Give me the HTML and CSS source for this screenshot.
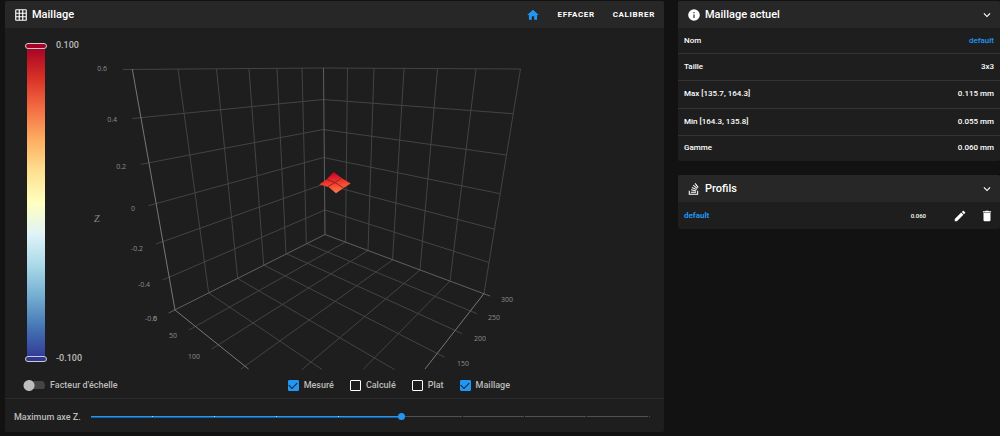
FILE: index.html
```html
<!DOCTYPE html>
<html lang="fr">
<head>
<meta charset="utf-8">
<title>Maillage</title>
<link rel="stylesheet" href="styles.css">
</head>
<body>
<main class="layout">
  <section class="card">
    <header class="card-head">
      <svg class="icon" viewBox="0 0 24 24" aria-hidden="true"><path d="M10,4V8H14V4H10M16,4V8H20V4H16M16,10V14H20V10H16M16,16V20H20V16H16M14,20V16H10V20H14M8,20V16H4V20H8M8,14V10H4V14H8M8,8V4H4V8H8M10,14H14V10H10V14M4,2H20A2,2 0 0,1 22,4V20A2,2 0 0,1 20,22H4C2.92,22 2,21.1 2,20V4A2,2 0 0,1 4,2Z"/></svg>
      <h1 class="title">Maillage</h1>
      <div class="toolbar">
        <button class="btn btn-home" aria-label="Origine"><svg class="icon" viewBox="0 0 24 24" aria-hidden="true"><path d="M10,20V14H14V20H19V12H22L12,3L2,12H5V20H10Z"/></svg></button>
        <button class="btn">EFFACER</button>
        <button class="btn">CALIBRER</button>
      </div>
    </header>

    <svg class="chart" viewBox="5 28 659 342" role="img" aria-label="Maillage du plateau">
      <defs>
        <linearGradient id="scale" x1="0" y1="0" x2="0" y2="1">
          <stop offset="0" stop-color="#a50026"/>
          <stop offset=".1" stop-color="#d73027"/>
          <stop offset=".2" stop-color="#f46d43"/>
          <stop offset=".3" stop-color="#fdae61"/>
          <stop offset=".4" stop-color="#fee090"/>
          <stop offset=".5" stop-color="#ffffbf"/>
          <stop offset=".6" stop-color="#e0f3f8"/>
          <stop offset=".7" stop-color="#abd9e9"/>
          <stop offset=".8" stop-color="#74add1"/>
          <stop offset=".9" stop-color="#4575b4"/>
          <stop offset="1" stop-color="#313695"/>
        </linearGradient>
        <linearGradient id="heat" gradientUnits="userSpaceOnUse" x1="333" y1="172" x2="336" y2="193">
          <stop offset="0" stop-color="#c80028"/>
          <stop offset=".5" stop-color="#ee3a2c"/>
          <stop offset="1" stop-color="#ff7a45"/>
        </linearGradient>
      </defs>

      <rect x="27" y="46" width="18" height="313" fill="url(#scale)"/>
      <rect class="handle" x="25.5" y="43.5" width="21" height="5" rx="2.5" fill="#a50026"/>
      <rect class="handle" x="25.5" y="356.5" width="21" height="5" rx="2.5" fill="#313695"/>
      <text class="scale-label" x="56" y="48">0.100</text>
      <text class="scale-label" x="56" y="361">-0.100</text>

      <g class="grid">
        <path d="M178 69L208.7 293M216.5 69L237.7 278.5M249 69L263.7 265M277 69L286 253.5M302 68L306.3 243.3"/>
        <path d="M347.5 68L345.5 242M374 68L368 250.5M404 68.5L392.5 260M437.5 68.5L420 270M476 69L450 281M520.5 69L484 293.5"/>
        <path d="M123 69.5L323 68L520.5 69M132.5 118.5L323 99.5L513 113.7M141 164.3L323 129.5L506.5 155M148.5 205.7L323.5 157.5L500 193.7M156 244L324 184L494 229M162.5 280L325 210L489 262.5"/>
        <path d="M189 330L345.5 242M211.7 349L368 250.5M241 369L392.5 260M302 369.5L420 270M363 369.5L450 281"/>
        <path d="M208.7 293L322 369.5M237.7 278.5L394.5 369.5M263.7 265L444.7 357.3M286 253.5L462.3 333.7M306.3 243.3L477 313.7"/>
      </g>
      <path class="edge" d="M323.5 68L325 234.5M168.7 313L325 234.5L490 296"/>
      <path class="axis" d="M132.3 69L175 310L248.5 369M484 293.5L425 369"/>

      <path fill="url(#heat)" d="M333.7 172L341.5 178L350.7 183.5L343.5 188L336 193.3L328.5 187L319.3 184.5L327 179Z"/>
      <path class="mesh" d="M327 179.5L335 182.5L343.5 188M341.5 178L335 182.5L328 186.5"/>

      <g class="tick tick-left">
        <text x="107" y="71">0.6</text>
        <text x="117" y="122">0.4</text>
        <text x="126" y="169">0.2</text>
        <text x="135" y="211">0</text>
        <text x="143" y="251">-0.2</text>
        <text x="150" y="287">-0.4</text>
        <text x="157" y="321">-0.6</text>
        <text x="157" y="321">0</text>
        <text x="177" y="338">50</text>
        <text x="200" y="359">100</text>
      </g>
      <g class="tick">
        <text x="501" y="302">300</text>
        <text x="488" y="320">250</text>
        <text x="474" y="341">200</text>
        <text x="457" y="366">150</text>
      </g>
      <text class="axis-name" x="94" y="222">Z</text>
    </svg>

    <form class="options">
      <label class="switch"><input type="checkbox" role="switch">Facteur d'échelle</label>
      <div class="checks">
        <label class="check"><input type="checkbox" checked>Mesuré</label>
        <label class="check"><input type="checkbox">Calculé</label>
        <label class="check"><input type="checkbox">Plat</label>
        <label class="check"><input type="checkbox" checked>Maillage</label>
      </div>
    </form>

    <div class="slider-row">
      <label for="zmax">Maximum axe Z.</label>
      <input class="slider" id="zmax" type="range" min="0" max="9" value="5">
    </div>
  </section>

  <aside class="side">
    <section class="card">
      <header class="card-head side-head">
        <svg class="icon" viewBox="0 0 24 24" aria-hidden="true"><path d="M13,9H11V7H13M13,17H11V11H13M12,2A10,10 0 0,0 2,12A10,10 0 0,0 12,22A10,10 0 0,0 22,12A10,10 0 0,0 12,2Z"/></svg>
        <h2 class="title">Maillage actuel</h2>
        <button class="btn-icon toggle" aria-label="Réduire"><svg class="icon" viewBox="0 0 24 24" aria-hidden="true"><path d="M7.41,8.58L12,13.17L16.59,8.58L18,10L12,16L6,10L7.41,8.58Z"/></svg></button>
      </header>
      <table class="facts">
        <tr><th scope="row">Nom</th><td class="accent">default</td></tr>
        <tr><th scope="row">Taille</th><td>3x3</td></tr>
        <tr><th scope="row">Max [135.7, 164.3]</th><td>0.115 mm</td></tr>
        <tr><th scope="row">Min [164.3, 135.8]</th><td>0.055 mm</td></tr>
        <tr><th scope="row">Gamme</th><td>0.060 mm</td></tr>
      </table>
    </section>

    <section class="card">
      <header class="card-head side-head">
        <svg class="icon" viewBox="0 0 24 24" aria-hidden="true"><path d="M17.36,20.2V14.82H19.15V22H3V14.82H4.8V20.2H17.36M6.77,14.32L7.14,12.56L15.93,14.41L15.56,16.17L6.77,14.32M7.93,10.11L8.69,8.5L16.83,12.28L16.07,13.9L7.93,10.11M10.19,6.12L11.34,4.74L18.24,10.5L17.09,11.87L10.19,6.12M14.64,1.87L20,9.08L18.56,10.15L13.2,2.94L14.64,1.87M6.59,18.41V16.61H15.57V18.41H6.59Z"/></svg>
        <h2 class="title">Profils</h2>
        <button class="btn-icon toggle" aria-label="Réduire"><svg class="icon" viewBox="0 0 24 24" aria-hidden="true"><path d="M7.41,8.58L12,13.17L16.59,8.58L18,10L12,16L6,10L7.41,8.58Z"/></svg></button>
      </header>
      <div class="profile">
        <span class="accent">default</span>
        <span class="variance">0.060</span>
        <button class="btn-icon" aria-label="Modifier"><svg class="icon" viewBox="0 0 24 24" aria-hidden="true"><path d="M20.71,7.04C21.1,6.65 21.1,6 20.71,5.63L18.37,3.29C18,2.9 17.35,2.9 16.96,3.29L15.12,5.12L18.87,8.87M3,17.25V21H6.75L17.81,9.93L14.06,6.18L3,17.25Z"/></svg></button>
        <button class="btn-icon" aria-label="Supprimer"><svg class="icon" viewBox="0 0 24 24" aria-hidden="true"><path d="M19,4H15.5L14.5,3H9.5L8.5,4H5V6H19M6,19A2,2 0 0,0 8,21H16A2,2 0 0,0 18,19V7H6V19Z"/></svg></button>
      </div>
    </section>
  </aside>
</main>
</body>
</html>
```

FILE: styles.css
```css
* { box-sizing: border-box; }

body {
  margin: 0;
  background: #121212;
  color: #fff;
  font-family: Roboto, "Liberation Sans", sans-serif;
  font-size: 9px;
  line-height: 12px;
}

.layout {
  display: grid;
  grid-template-columns: 659fr 322fr;
  gap: 14px;
  align-items: start;
  padding: 1px 0 3px 5px;
}

.side {
  display: grid;
  gap: 14px;
}

.card {
  background: #1e1e1e;
  border-radius: 2px;
  overflow: hidden;
}

.card-head {
  display: flex;
  align-items: center;
  gap: 4px;
  height: 27px;
  padding: 0 9px;
  background: #272727;
}

.title {
  margin: 0;
  font-size: 11px;
  font-weight: 500;
  line-height: 14px;
}

.icon {
  display: block;
  width: 14px;
  height: 14px;
  fill: currentColor;
}

.btn,
.btn-icon {
  padding: 0;
  border: 0;
  background: none;
  color: inherit;
  font: inherit;
  cursor: pointer;
}

.toolbar {
  display: flex;
  align-items: center;
  gap: 18px;
  margin-left: auto;
}

.btn {
  font-size: 8px;
  font-weight: 700;
  letter-spacing: 0.08em;
}

.btn-home { color: #2196f3; }

.toggle { margin-left: auto; }

.side-head { padding-right: 6px; }

.chart {
  display: block;
  width: 100%;
  height: auto;
}

.handle { stroke: #ccc; stroke-width: 1; }

.scale-label {
  fill: #bbb;
  font-size: 9px;
  font-weight: 500;
}

.grid, .edge, .axis, .mesh { fill: none; stroke-width: 1; }
.grid { stroke: #444; }
.edge { stroke: #606060; }
.axis { stroke: #777; }
.mesh { stroke: #9c1c1c; }

.tick {
  fill: #8c8c8c;
  font-family: "Open Sans", "Noto Sans", sans-serif;
  font-size: 7px;
}

.tick-left { text-anchor: end; }

.axis-name {
  fill: #8c8c8c;
  font-family: "Liberation Serif", serif;
  font-size: 10px;
  font-style: italic;
}

.options {
  display: flex;
  align-items: center;
  height: 29px;
  padding: 2px 18px 0;
  border-bottom: 1px solid #2b2b2b;
  color: #bcbcbc;
}

.options, .slider-row { font-weight: 500; }

.checks {
  display: flex;
  gap: 16px;
  margin: 0 136px 0 auto;
}

.switch, .check {
  display: flex;
  align-items: center;
  gap: 5px;
}

.switch input {
  appearance: none;
  width: 22px;
  height: 11px;
  margin: 0;
  border-radius: 6px;
  background:
    radial-gradient(circle at 6px 50%, #bdbdbd 5px, transparent 6px),
    linear-gradient(#444, #444) right center / 18px 8px no-repeat;
}

.check input {
  appearance: none;
  width: 11px;
  height: 11px;
  margin: 0;
  border: 1px solid #fff;
  border-radius: 1px;
  display: grid;
  place-items: center;
}

.check input:checked {
  border-color: #2196f3;
  background: #2196f3;
}

.check input:checked::before {
  content: "";
  width: 7px;
  height: 4px;
  margin-bottom: 2px;
  border: solid #1e1e1e;
  border-width: 0 0 1px 1px;
  transform: rotate(-45deg);
}

.slider-row {
  display: flex;
  align-items: center;
  gap: 10px;
  height: 33px;
  padding: 2px 14px 0 9px;
  color: #bcbcbc;
}

.slider {
  appearance: none;
  flex: 1;
  height: 7px;
  margin: 0;
  background:
    repeating-linear-gradient(90deg, transparent 0 61px, #b5d8f5 61px 62px) 0 3px / 56% 1px no-repeat,
    linear-gradient(#2196f3, #2196f3) 0 3px / 56% 1px no-repeat,
    linear-gradient(#1a5f98, #1a5f98) 0 4px / 56% 1px no-repeat,
    repeating-linear-gradient(90deg, #505050 0 61px, #1e1e1e 61px 62px) 0 3px / 100% 1px no-repeat;
}

.slider::-webkit-slider-thumb {
  appearance: none;
  width: 7px;
  height: 7px;
  border-radius: 50%;
  background: #2196f3;
}

.facts {
  width: 100%;
  height: 133px;
  border-collapse: collapse;
  font-size: 8px;
}

.facts th,
.facts td {
  padding: 0 6px;
  font-weight: 500;
  text-align: left;
}

.facts td { text-align: right; }

.facts tr + tr { border-top: 1px solid #333; }

.facts .accent,
.accent { color: #2196f3; }

.profile {
  display: flex;
  align-items: center;
  height: 27px;
  padding: 0 6px;
  font-size: 8px;
  font-weight: 500;
}

.accent { font-weight: 700; }

.variance {
  margin: 0 27px 0 auto;
  font-size: 6px;
}

.profile .btn-icon + .btn-icon { margin-left: 13px; }
```
